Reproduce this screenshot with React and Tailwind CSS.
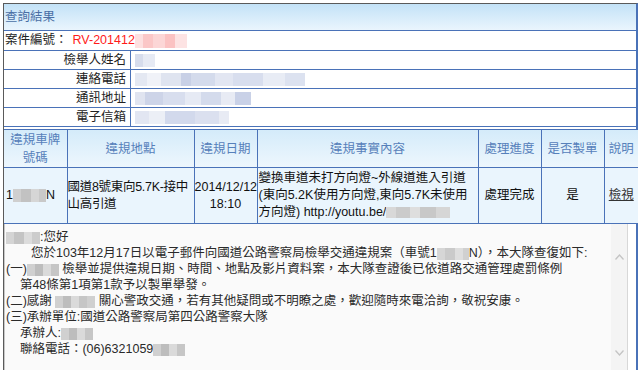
import React from 'react';

const FONT = { fontFamily: '"Liberation Sans", "Noto Sans CJK TC", sans-serif' };

// pixelated blur stand-in: list of [width, colour]
const Blur = ({ cells, h = 'h-[12px]' }) => (
  <span className={`inline-flex align-middle ${h}`}>
    {cells.map(([w, c], i) => (
      <span key={i} className="h-full" style={{ width: w, background: c }} />
    ))}
  </span>
);

const infoRows = [
  { label: '檢舉人姓名', blur: [[8, '#d6dcec'], [12, '#e6eaf4']] },
  { label: '連絡電話', blur: [[12, '#e4e8f2'], [14, '#f0f2f8'], [20, '#dfe4f0'], [10, '#c8d0e6'], [24, '#d4dbec'], [18, '#e2e6f2'], [30, '#d8deee'], [22, '#e8ecf5'], [20, '#dce2f0']] },
  { label: '通訊地址', blur: [[10, '#e0e4f0'], [18, '#cdd4e8'], [22, '#d8deee'], [16, '#e6eaf4'], [20, '#d4dbec'], [14, '#e8ebf4'], [16, '#c9d1e7']] },
  { label: '電子信箱', blur: [[14, '#e2e6f2'], [16, '#eceff6'], [30, '#d2d9ec'], [24, '#dbe0ef'], [10, '#e8ebf4']] },
];

const headers = [
  ['違規車牌\n號碼', 'w-[63px]'],
  ['違規地點', 'w-[127px]'],
  ['違規日期', 'w-[63px]'],
  ['違規事實內容', 'w-[221px]'],
  ['處理進度', 'w-[63px]'],
  ['是否製單', 'w-[63px]'],
  ['說明', 'w-[34px]'],
];

const grayBlur = (n) =>
  Array.from({ length: n }, (_, i) => [8, ['#d0d0d0', '#bdbdbd', '#dadada', '#c6c6c6'][i % 4]]);

export default function App() {
  return (
    <div className="w-[640px] h-[370px] bg-white overflow-hidden pt-[3px] pl-[3px] text-[12.5px]" style={FONT}>
      <div className="h-[367px] w-[635px] border-l border-t border-[#5a5a5a] border-r-2 border-r-[#4a72b8] flex flex-col">
        {/* title */}
        <div className="h-[27px] shrink-0 bg-gradient-to-b from-[#c3e2f7] to-[#eaf5fd] border-b border-[#4a72b8] pl-[1px] flex items-center text-[#4a6fa5]">
          查詢結果
        </div>

        {/* case no */}
        <div className="h-[20px] shrink-0 border-b border-[#4a72b8] flex items-center pl-[1px] text-[#222]">
          <span>案件編號：</span>
          <span className="ml-[5px] text-[#ff1a1a]">RV-201412</span>
          <Blur cells={[[8, '#fde0e0'], [10, '#fbc7c7'], [12, '#fcd6d6'], [10, '#fbc2c2'], [12, '#fde3e3']]} h="h-[14px]" />
        </div>

        {/* reporter info */}
        <div className="shrink-0">
          {infoRows.map((r) => (
            <div key={r.label} className="grid grid-cols-[127px_1fr] h-[19px] border-b border-[#4a72b8]">
              <div className="border-r border-[#4a72b8] text-right pr-[4px] text-[#222] leading-[18px]">{r.label}</div>
              <div className="flex items-center pl-[4px]">
                <Blur cells={r.blur} h="h-[13px]" />
              </div>
            </div>
          ))}
        </div>

        {/* result table */}
        <table className="mt-[2px] border-collapse table-fixed w-[634px] shrink-0">
          <thead>
            <tr className="h-[38px] bg-gradient-to-b from-[#d4ebfa] to-[#eef7fd]">
              {headers.map(([h, w]) => (
                <th
                  key={h}
                  className={`${w} border border-[#4a72b8] border-l-0 font-normal text-[#5680ba] leading-[18px] whitespace-pre-line p-0 first:border-l-0 last:border-r-0`}
                >
                  {h}
                </th>
              ))}
            </tr>
          </thead>
          <tbody>
            <tr className="h-[56px] bg-[#eaf5fd] text-[#111] leading-[17px]">
              <td className="border border-[#4a72b8] border-l-0 px-[2px]">
                <span className="inline-flex items-center">
                  1<Blur cells={[[8, '#cfcfcf'], [10, '#c2c2c2'], [8, '#d6d6d6'], [7, '#c9c9c9']]} h="h-[13px]" />N
                </span>
              </td>
              <td className="border border-[#4a72b8] px-0 align-middle break-all tracking-[-0.3px]">國道8號東向5.7K-接中山高引道</td>
              <td className="border border-[#4a72b8] text-center px-0">
                2014/12/12
                <br />
                18:10
              </td>
              <td className="border border-[#4a72b8] px-[1px] align-middle break-all">
                變換車道未打方向燈~外線道進入引道(東向5.2K使用方向燈,東向5.7K未使用方向燈) http://youtu.be/
                <Blur cells={[[10, '#d8d8d8'], [14, '#cbcbcb'], [10, '#dedede'], [16, '#c8c8c8'], [14, '#d6d6d6']]} h="h-[11px]" />
              </td>
              <td className="border border-[#4a72b8] text-center">處理完成</td>
              <td className="border border-[#4a72b8] text-center">是</td>
              <td className="border border-[#4a72b8] border-r-0 text-center">
                <span className="underline text-[#333]">檢視</span>
              </td>
            </tr>
          </tbody>
        </table>

        {/* reply text */}
        <div className="flex-1 flex min-h-0">
          <div className="w-[624px] border-l border-[#c8c8c8] bg-[#fafafa] flex">
            <div className="flex-1 pt-[5px] pl-[1px] text-[#2a2a2a] leading-[16px] whitespace-pre">
              <div>
                <Blur cells={[[8, '#d4d4d4'], [10, '#c4c4c4'], [8, '#dcdcdc'], [8, '#cccccc']]} h="h-[12px]" />:您好
              </div>
              <div>
                {'　　您於103年12月17日以電子郵件向國道公路警察局檢舉交通違規案（車號1'}
                <Blur cells={[[8, '#d6d6d6'], [10, '#cacaca'], [8, '#dedede'], [6, '#d0d0d0']]} h="h-[12px]" />
                {'N），本大隊查復如下:'}
              </div>
              <div>
                (一)
                <Blur cells={grayBlur(4)} h="h-[12px]" />
                {' 檢舉並提供違規日期、時間、地點及影片資料案，本大隊查證後已依道路交通管理處罰條例'}
              </div>
              <div>{'    第48條第1項第1款予以製單舉發。'}</div>
              <div>
                {'(二)感謝 '}
                <Blur cells={grayBlur(5)} h="h-[12px]" />
                {' 關心警政交通，若有其他疑問或不明瞭之處，歡迎隨時來電洽詢，敬祝安康。'}
              </div>
              <div>(三)承辦單位:國道公路警察局第四公路警察大隊</div>
              <div>
                {'    承辦人:'}
                <Blur cells={grayBlur(4)} h="h-[12px]" />
              </div>
              <div>
                {'    聯絡電話：(06)6321059'}
                <Blur cells={grayBlur(4)} h="h-[12px]" />
              </div>
            </div>
            {/* scrollbar */}
            <div className="w-[17px] bg-[#f4f4f4] border-r border-[#d8d8d8] flex flex-col items-center justify-between pt-[30px] pb-[14px]">
              <svg width="9" height="6" viewBox="0 0 9 6" fill="none" stroke="#c4c4c4" strokeWidth="1.3">
                <path d="M0.5 5.5 L4.5 1 L8.5 5.5" />
              </svg>
              <svg width="9" height="6" viewBox="0 0 9 6" fill="none" stroke="#c4c4c4" strokeWidth="1.3">
                <path d="M0.5 0.5 L4.5 5 L8.5 0.5" />
              </svg>
            </div>
          </div>
          <div className="flex-1 bg-white" />
        </div>
      </div>
    </div>
  );
}
